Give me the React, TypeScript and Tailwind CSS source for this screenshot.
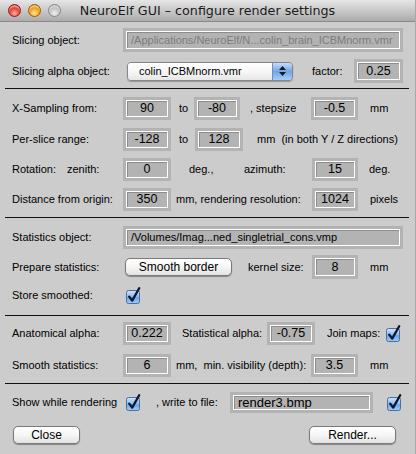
import React from "react";

const Edit = ({
  className,
  children,
  left,
  textCls,
}: {
  className: string;
  children: React.ReactNode;
  left?: boolean;
  textCls?: string;
}) => (
  <div className={`shrink-0 bg-[#b3b3b3] p-[3px] ${className}`}>
    <div
      className={`h-full w-full border border-white shadow-[inset_1px_1px_0_#8c8c8c] flex items-center overflow-hidden whitespace-nowrap ${
        left ? "justify-start pl-[4px]" : "justify-center"
      }`}
    >
      <span className={textCls ?? "text-[12.5px] text-black"}>{children}</span>
    </div>
  </div>
);

const Check = () => (
  <svg width="16" height="17" viewBox="0 0 16 17" className="shrink-0">
    <defs>
      <linearGradient id="cbg" x1="0" y1="0" x2="0" y2="1">
        <stop offset="0" stopColor="#d2e6fb" />
        <stop offset="0.45" stopColor="#8fbef2" />
        <stop offset="0.55" stopColor="#6aa8ee" />
        <stop offset="1" stopColor="#9fcaf7" />
      </linearGradient>
    </defs>
    <rect x="0.5" y="3.5" width="13" height="13" rx="2" fill="url(#cbg)" stroke="#4d6f99" />
    <path
      d="M3.2 9.6 L6.2 13.6 L13.2 1.2"
      fill="none"
      stroke="#0b1730"
      strokeWidth="2.3"
      strokeLinecap="round"
      strokeLinejoin="round"
    />
  </svg>
);

const Btn = ({ className, children }: { className: string; children: React.ReactNode }) => (
  <div
    className={`shrink-0 flex items-center justify-center rounded-[5px] border border-[#7a7a7a] bg-gradient-to-b from-[#ffffff] via-[#f6f6f6] to-[#e2e2e2] shadow-[0_1px_1px_rgba(0,0,0,0.35)] text-[12px] text-black ${className}`}
  >
    {children}
  </div>
);

const Sep = () => <div className="ml-[5px] w-[404px] h-px bg-[#111111]" />;

export default function App() {
  return (
    <div
      className="w-[416px] h-[454px] overflow-hidden bg-[#cccccc] text-[11px] text-black flex flex-col border-r border-[#a8a8a8]"
      style={{ fontFamily: '"Liberation Sans", Arial, sans-serif' }}
    >
      {/* Title bar */}
      <div className="relative h-[22px] shrink-0 bg-gradient-to-b from-[#e6e6e6] to-[#acacac] border-b border-[#8a8a8a] flex items-center justify-center">
        <div className="absolute left-[8px] top-[4px] flex gap-[7px]">
          <div className="w-[13px] h-[13px] rounded-full border border-[#8a1a12] bg-[radial-gradient(circle_at_50%_75%,#ffb3a6_0%,#ea4a3a_45%,#b01c10_100%)] shadow-[inset_0_2px_1px_rgba(255,255,255,0.5)]" />
          <div className="w-[13px] h-[13px] rounded-full border border-[#9a5a0a] bg-[radial-gradient(circle_at_50%_75%,#ffe9a0_0%,#f5a623_45%,#c0700a_100%)] shadow-[inset_0_2px_1px_rgba(255,255,255,0.5)]" />
          <div className="w-[13px] h-[13px] rounded-full border border-[#8a8a8a] bg-[radial-gradient(circle_at_50%_75%,#f0f0f0_0%,#c4c4c4_50%,#9a9a9a_100%)] shadow-[inset_0_2px_1px_rgba(255,255,255,0.5)]" />
        </div>
        <span
          className="text-[12.7px] text-[#1a1a1a]"
          style={{ fontFamily: '"DejaVu Sans", sans-serif' }}
        >
          NeuroElf GUI – configure render settings
        </span>
      </div>

      {/* Row 1 */}
      <div className="mt-[6px] h-[24px] flex items-center pl-[12px]">
        <span className="w-[111px] shrink-0">Slicing object:</span>
        <Edit className="w-[280px] h-[24px]" left textCls="text-[11px] text-[#7c7c7c]">
          /Applications/NeuroElf/N...colin_brain_ICBMnorm.vmr
        </Edit>
      </div>

      {/* Row 2 */}
      <div className="mt-[7px] h-[24px] flex items-center pl-[12px]">
        <span className="w-[115px] shrink-0">Slicing alpha object:</span>
        <div className="w-[166px] h-[19px] shrink-0 flex rounded-[4px] border border-[#858585] overflow-hidden shadow-[0_1px_1px_rgba(0,0,0,0.25)]">
          <div className="flex-1 flex items-center pl-[11px] bg-gradient-to-b from-[#ffffff] via-[#f7f7f7] to-[#e6e6e6]">
            colin_ICBMnorm.vmr
          </div>
          <div className="w-[20px] border-l border-[#6d8fb8] bg-gradient-to-b from-[#c6ddf8] via-[#6ea6e8] to-[#a8cdf5] flex flex-col items-center justify-center gap-[2px]">
            <svg width="7" height="4" viewBox="0 0 7 4">
              <path d="M0 4 L3.5 0 L7 4 Z" fill="#1a1a1a" />
            </svg>
            <svg width="7" height="4" viewBox="0 0 7 4">
              <path d="M0 0 L3.5 4 L7 0 Z" fill="#1a1a1a" />
            </svg>
          </div>
        </div>
        <span className="pl-[19px] w-[61px] shrink-0">factor:</span>
        <Edit className="w-[49px] h-[24px]">0.25</Edit>
      </div>

      <div className="mt-[5px]">
        <Sep />
      </div>

      {/* Row 3 */}
      <div className="mt-[8px] h-[23px] flex items-center pl-[12px]">
        <span className="w-[111px] shrink-0">X-Sampling from:</span>
        <Edit className="w-[48px] h-[23px]">90</Edit>
        <span className="pl-[8px] w-[23px] shrink-0">to</span>
        <Edit className="w-[46px] h-[23px]">-80</Edit>
        <span className="pl-[10px] w-[71px] shrink-0">, stepsize</span>
        <Edit className="w-[47px] h-[23px]">-0.5</Edit>
        <span className="pl-[12px]">mm</span>
      </div>

      {/* Row 4 */}
      <div className="mt-[8px] h-[23px] flex items-center pl-[12px]">
        <span className="w-[111px] shrink-0">Per-slice range:</span>
        <Edit className="w-[48px] h-[23px]">-128</Edit>
        <span className="pl-[8px] w-[24px] shrink-0">to</span>
        <Edit className="w-[48px] h-[23px]">128</Edit>
        <span className="pl-[14px] whitespace-pre">mm  (in both Y / Z directions)</span>
      </div>

      {/* Row 5 */}
      <div className="mt-[7px] h-[23px] flex items-center pl-[12px]">
        <span className="w-[55px] shrink-0">Rotation:</span>
        <span className="w-[56px] shrink-0">zenith:</span>
        <Edit className="w-[48px] h-[23px]">0</Edit>
        <span className="pl-[18px] w-[73px] shrink-0">deg.,</span>
        <span className="w-[68px] shrink-0">azimuth:</span>
        <Edit className="w-[46px] h-[23px]">15</Edit>
        <span className="pl-[11px]">deg.</span>
      </div>

      {/* Row 6 */}
      <div className="mt-[7px] h-[23px] flex items-center pl-[12px]">
        <span className="w-[111px] shrink-0">Distance from origin:</span>
        <Edit className="w-[48px] h-[23px]">350</Edit>
        <span className="pl-[5px] w-[141px] shrink-0">mm, rendering resolution:</span>
        <Edit className="w-[46px] h-[23px]">1024</Edit>
        <span className="pl-[12px]">pixels</span>
      </div>

      <div className="mt-[6px]">
        <Sep />
      </div>

      {/* Row 7 */}
      <div className="mt-[8px] h-[23px] flex items-center pl-[12px]">
        <span className="w-[111px] shrink-0">Statistics object:</span>
        <Edit className="w-[280px] h-[23px]" left textCls="text-[11px] text-black">
          /Volumes/Imag...ned_singletrial_cons.vmp
        </Edit>
      </div>

      {/* Row 8 */}
      <div className="mt-[6px] h-[24px] flex items-center pl-[12px]">
        <span className="w-[113px] shrink-0">Prepare statistics:</span>
        <Btn className="w-[107px] h-[18px]">Smooth border</Btn>
        <span className="pl-[16px] w-[80px] shrink-0">kernel size:</span>
        <Edit className="w-[46px] h-[24px]">8</Edit>
        <span className="pl-[12px]">mm</span>
      </div>

      {/* Row 9 */}
      <div className="mt-[6px] h-[20px] flex items-center pl-[12px]">
        <span className="w-[114px] shrink-0">Store smoothed:</span>
        <Check />
      </div>

      <div className="mt-[10px]">
        <Sep />
      </div>

      {/* Row 10 */}
      <div className="mt-[6px] h-[23px] flex items-center pl-[12px]">
        <span className="w-[111px] shrink-0">Anatomical alpha:</span>
        <Edit className="w-[48px] h-[23px]">0.222</Edit>
        <span className="pl-[11px] w-[96px] shrink-0">Statistical alpha:</span>
        <Edit className="w-[48px] h-[23px]">-0.75</Edit>
        <span className="pl-[12px] w-[71px] shrink-0">Join maps:</span>
        <Check />
      </div>

      {/* Row 11 */}
      <div className="mt-[9px] h-[23px] flex items-center pl-[12px]">
        <span className="w-[111px] shrink-0">Smooth statistics:</span>
        <Edit className="w-[48px] h-[23px]">6</Edit>
        <span className="pl-[5px] w-[140px] shrink-0 whitespace-pre">mm,  min. visibility (depth):</span>
        <Edit className="w-[47px] h-[23px]">3.5</Edit>
        <span className="pl-[12px]">mm</span>
      </div>

      <div className="mt-[6px]">
        <Sep />
      </div>

      {/* Row 12 */}
      <div className="mt-[8px] h-[21px] flex items-center pl-[12px]">
        <span className="w-[114px] shrink-0">Show while rendering</span>
        <Check />
        <span className="pl-[14px] w-[88px] shrink-0">, write to file:</span>
        <Edit className="w-[143px] h-[21px]" left textCls="text-[13px] text-black">
          render3.bmp
        </Edit>
        <div className="w-[14px] shrink-0" />
        <Check />
      </div>

      {/* Row 13 */}
      <div className="mt-[11px] h-[22px] flex items-center pl-[13px] pr-[19px]">
        <Btn className="w-[67px] h-[18px]">Close</Btn>
        <div className="flex-1" />
        <Btn className="w-[87px] h-[18px]">Render...</Btn>
      </div>
    </div>
  );
}
